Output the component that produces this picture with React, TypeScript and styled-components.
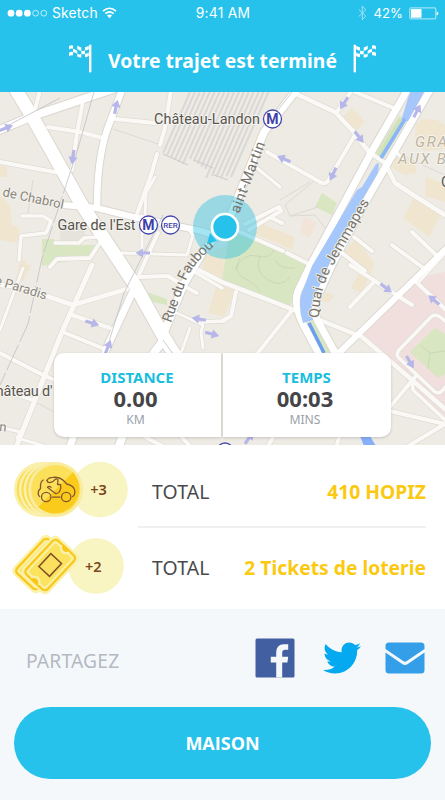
import React from 'react';
import styled, { createGlobalStyle } from 'styled-components';
import { FaTwitter } from 'react-icons/fa';

const Global = createGlobalStyle`
  * { box-sizing: border-box; }
  body { margin: 0; background: #f4f8fb; }
`;

const Screen = styled.div`
  display: flex;
  flex-direction: column;
  width: 445px;
  height: 800px;
  overflow: hidden;
  background: #f4f8fb;
  font-family: 'Noto Sans', 'Open Sans', sans-serif;
`;

const Header = styled.header`
  height: 92px;
  background: #26c2eb;
  color: #fff;
`;

const StatusBar = styled.div`
  display: grid;
  grid-template-columns: 1fr auto 1fr;
  align-items: center;
  height: 26px;
  padding: 0 6px 0 7px;
  font: 400 13.2px/26px Inter, sans-serif;
`;

const StatusGroup = styled.div<{ $end?: boolean }>`
  display: flex;
  align-items: center;
  justify-content: ${(p) => (p.$end ? 'flex-end' : 'flex-start')};
  gap: ${(p) => (p.$end ? 6 : 4)}px;
`;

const Carrier = styled.span`
  font-size: 13.8px;
  letter-spacing: 0.2px;
`;

const Clock = styled.span`
  font-size: 13.8px;
  letter-spacing: 0.25px;
`;

const TitleRow = styled.div`
  display: flex;
  align-items: flex-start;
  justify-content: center;
  padding-top: 18px;
  gap: 16px;
`;

const Title = styled.h1`
  margin: 3px 0 0;
  font-size: 19.3px;
  font-weight: 700;
  line-height: 28px;
  letter-spacing: 0.05px;
  white-space: nowrap;
`;

const MapArea = styled.section`
  display: grid;
  height: 353px;
  overflow: hidden;
  background: #eeebe5;
  > * { grid-area: 1 / 1; }
`;

const Stats = styled.div`
  z-index: 1;
  display: grid;
  grid-template-columns: 167px 168px;
  gap: 2px;
  align-self: end;
  justify-self: start;
  height: 84px;
  margin: 0 0 8px 54px;
`;

const StatCard = styled.div<{ $side: 'left' | 'right' }>`
  display: flex;
  flex-direction: column;
  align-items: center;
  padding: 14px 4px 0 0;
  background: #fff;
  border-radius: ${(p) => (p.$side === 'left' ? '10px 0 0 10px' : '0 10px 10px 0')};
  box-shadow: 0 1px 3px rgba(0, 0, 0, 0.17);
`;

const StatLabel = styled.div`
  padding-left: 3px;
  font-size: 15px;
  line-height: 20px;
  font-weight: 700;
  color: #17bee0;
`;

const StatValue = styled.div`
  font-size: 22px;
  line-height: 22px;
  font-weight: 700;
  color: #454548;
`;

const StatUnit = styled.div`
  margin-top: 2px;
  font-size: 12.2px;
  line-height: 17px;
  color: #9a9fab;
`;

const Rewards = styled.section`
  height: 164px;
  padding: 7px 19px 0 10px;
  background: #fff;
`;

const RewardRow = styled.div`
  display: grid;
  grid-template-columns: 128px 1fr;
  height: 76px;
`;

const RewardText = styled.div<{ $divided?: boolean }>`
  display: flex;
  align-items: center;
  justify-content: space-between;
  padding: ${(p) => (p.$divided ? 4 : 3)}px 0 0 14px;
  border-bottom: ${(p) => (p.$divided ? '2px solid #f0f0f1' : '0')};
`;

const TotalLabel = styled.span`
  font-size: 19.4px;
  letter-spacing: 0.15px;
  color: #4a4a4d;
`;

const TotalValue = styled.span`
  font-size: 19.3px;
  font-weight: 700;
  color: #fbc90f;
  white-space: nowrap;
`;

const ShareRow = styled.section`
  display: flex;
  align-items: center;
  height: 98px;
  padding: 0 20px 0 26px;
  color: #b5bac2;
`;

const ShareLabel = styled.span`
  flex: 1;
  padding-top: 4px;
  font-size: 19.3px;
  letter-spacing: 0.15px;
`;

const ShareIcons = styled.div`
  display: flex;
  align-items: center;
`;

const ShareLink = styled.button<{ $gap?: number }>`
  display: flex;
  margin: 0 0 0 ${(p) => p.$gap ?? 0}px;
  padding: 0;
  border: 0;
  background: none;
  color: #05a9ef;
`;

const HomeButton = styled.button`
  align-self: center;
  width: 417px;
  height: 72px;
  padding: 0 0 1px;
  border: 0;
  border-radius: 36px;
  background: #26c2eb;
  color: #fff;
  font: 700 18px 'Open Sans', sans-serif;
`;

const Flag = ({ flipped }: { flipped?: boolean }) => (
  <svg width="24" height="30" viewBox="0 0 24 30">
    <g transform={flipped ? 'matrix(-1 0 0 1 24 0)' : undefined} fill="#fff">
      <rect x="21" y="0.5" width="2.4" height="28" rx="1.1" />
      <path d="M1 2.2q2-1.3 4-.7v3.3q-2-.6-4 .7zM9.3 1.6q2 1.6 4 2v3.3q-2-.4-4-2zM17 3.2q2-.2 3.8-1.4v3.5q-2 1.2-3.8 1.3z" />
      <path d="M5 4.8q2.2.4 4.3 2v3.2q-2-1.6-4.3-2zM13.3 6.8q2 .3 3.7-.2v3.3q-2 .5-3.7.1z" />
      <path d="M1 8.7q2-1.3 4-.7v3.3q-2-.6-4 .9zM9.3 9.8q2 1 4 .3v3.3q-2 .4-4-1zM17 9.8q2-.3 3.8-1.4v3.5q-2 1.2-3.8 1.3z" />
    </g>
  </svg>
);

const SignalDots = () => (
  <svg width="41" height="9" viewBox="0 0 41 9">
    {[4, 12.2, 20.4].map((x) => <circle key={x} cx={x} cy="4.2" r="3.4" fill="#fff" />)}
    {[28.6, 36.8].map((x) => <circle key={x} cx={x} cy="4.2" r="2.9" fill="none" stroke="#fff" strokeWidth=".8" opacity=".85" />)}
  </svg>
);

const Wifi = () => (
  <svg width="15" height="12" viewBox="0 0 15 12" fill="none" stroke="#fff" strokeWidth="1.6">
    <path d="M1 4.2Q7.5-1.7 14 4.2M3.3 6.7Q7.5 3 11.7 6.7" />
    <path d="M7.5 11.2L5 8.6q2.5-2 5 0z" fill="#fff" stroke="none" />
  </svg>
);

const Bluetooth = () => (
  <svg width="9" height="16" viewBox="0 0 9 16" fill="none" stroke="#fff" strokeWidth="1" opacity=".55">
    <path d="M.8 4.5l7 6.6-3.5 3.7V1.2l3.5 3.7-7 6.6" />
  </svg>
);

const Battery = () => (
  <svg width="30" height="13" viewBox="0 0 30 13">
    <rect x=".8" y=".9" width="26" height="11" rx=".8" fill="none" stroke="#fff" strokeWidth=".9" opacity=".75" />
    <rect x="2" y="2.1" width="10.5" height="8.6" fill="#fff" />
    <path d="M27.6 4.5q1.8.5 1.8 2t-1.8 2z" fill="#fff" />
  </svg>
);

type Road = [string, number];

const ROADS: Road[] = [
  ['M40 90L35 110', 4], ['M83 101L77 133L72 170', 4], ['M48 127L80 132L103 138', 4],
  ['M0 162L60 173', 4], ['M115 119L155 123', 4], ['M171 90L165 128L160 145', 4],
  ['M157 154L152 172L137 214', 4], ['M155 177L146 193L145 215', 3],
  ['M22 216H43L51 221L46 233L21 236L19 260', 3.5], ['M55 243H79L84 238L97 237', 3.5],
  ['M50 267L57 259L90 258L101 241', 4], ['M122 253L187 255L193 235L187 227L140 216', 3],
  ['M142 228V256', 3], ['M158 233L133 288', 4], ['M92 265L62 332L17 445', 5],
  ['M23 268L0 330', 3], ['M0 285L20 287L73 305L127 289', 4.5], ['M72 315L110 328', 4],
  ['M63 332L107 350', 4], ['M0 353L43 375L57 381', 4], ['M0 390L33 400', 3.5],
  ['M0 427L20 432L17 438L44 446', 3], ['M140 277L168 276L182 285L197 293', 4],
  ['M177 313L203 325L201 332L203 348M190 328L180 356', 3],
  ['M193 271L222 288M203 322L222 321L227 318', 3.5], ['M145 437L170 450M175 430L190 446', 4],
  ['M352 90L337 112', 4], ['M355 92L396 109', 4],
  ['M355 135L330 177Q327 186 320 182L267 152', 4], ['M257 168L280 187', 3.5],
  ['M245 224L279 207L281 211L249 230', 4], ['M272 218L282 223', 4],
  ['M238 231L283 251M287 253L307 263', 4], ['M199 270L222 282L294 310', 4.5],
  ['M292 310L257 354', 4], ['M236 292L231 316L223 321', 4], ['M292 92L335 112L352 130L369 152L385 163L395 183L418 198L445 215', 4.5],
  ['M397 153L404 160', 3.5], ['M412 232L435 254', 4], ['M392 245L422 267', 4],
  ['M354 237L372 251', 4], ['M342 253L365 271', 4], ['M350 265L375 281L412 305', 4],
  ['M375 281L350 307', 4], ['M415 281L445 309', 4], ['M419 282L445 253', 3],
  ['M315 318L362 337L412 380L445 409', 4.5], ['M415 377L390 407', 4],
  ['M390 411L445 424L405 448', 4], ['M445 321Q436 312 431 317L399 350Q395 356 400 359L434 391Q440 396 445 387', 3.5],
  ['M412 380L413 390L445 420', 3.5], ['M273 437L265 452M340 434L336 448', 4],
];

const MAIN_ROADS: Road[] = [
  ['M10 80L33 118L80 202L135 285L165 339L178 360', 13], ['M-3 131L33 116L113 89', 8],
  ['M122 90L107 130Q97 160 97 208', 6.5], ['M63 205L97 208L137 218L197 230L222 237', 6],
  ['M135 287L108 345L70 446', 7], ['M166 337L153 354L119 446', 8],
  ['M298 88L264 132L228 222L204 250L184 284L165 330', 7.5],
  ['M408 89L372 151L350 192L309 268L298 291Q293 304 303 324L321 358', 7],
  ['M430 90L385 168L362 208L333 263L316 300Q312 312 320 325L338 358', 7],
  ['M449 246L339 353', 6],
];

const ARROWS: [number, number, number][] = [
  [116, 107, -78], [73, 157, 98], [6, 128, -22], [143, 253, 180], [92, 323, 17],
  [108, 347, -68], [199, 319, 190], [212, 334, 15], [344, 103, 123], [359, 137, 52],
  [284, 159, 203], [333, 174, 115], [417, 111, -62], [386, 288, 37], [434, 300, 220],
  [410, 362, 60], [249, 438, -55],
];

const RAILS = Array.from({ length: 17 }, (_, i) => 190 + i * 4.9);

const Metro = ({ x, y, label }: { x: number; y: number; label: string }) => (
  <g fontFamily="Roboto, sans-serif">
    <circle cx={x} cy={y} r="9" fill="#fff" stroke="#4647ae" strokeWidth="1.3" />
    <text x={x} y={y + (label === 'M' ? 5 : 3)} textAnchor="middle" fontSize={label === 'M' ? 14 : 8} fontWeight={label === 'M' ? 700 : 500} fill="#3e3fa7">{label}</text>
  </g>
);

const CityMap = () => (
  <svg width="445" height="353" viewBox="0 92 445 353">
    <defs>
      <path id="faubourg" d="M171 323L186 281Q193 262 224 238" />
      <path id="quai" d="M319 318Q319 292 331 269L373 196" />
    </defs>
    <rect y="92" width="445" height="353" fill="#eeebe5" />
    <g fill="#f0e6d0">
      <path d="M0 165L7 167V177H0zM0 195L10 205L12 225L20 228L17 243L0 240zM20 265H31L23 282L15 280zM204 255L226 246L222 281L202 271zM217 284L235 290L224 317L208 313zM24 258L28 267H18z" />
      <path d="M352 108L365 122L357 130L340 120zM259 223L295 237L292 250L255 234zM414 197L442 213L429 237L403 218zM356 238L374 263L370 270L342 255z" />
      <path d="M422 119l15 1 8 5v24l-19 2-12-5 2-22zM396 158l18 1 3 14-12 2-13-7zM426 177l19 7v18l-20-6zM363 265H374L362 294L351 288zM327 292L334 296L328 303L320 300z" />
    </g>
    <path d="M304 217L317 223L310 238L300 232z" fill="#f2e4d8" />
    <path d="M60 220L85 224V240L60 243z" fill="#e6e3dd" />
    <g fill="#d8e6c2">
      <path d="M42 239H54V245H95L90 257L42 266zM147 292L167 299V305L148 301zM322 193L337 203L332 215L315 207z" />
      <path d="M228 240L238 232L308 264L295 289L290 307L222 280z" />
      <path d="M399 116L407 119L381 163L372 157zM306 322L313 321L334 353H321z" />
    </g>
    <path d="M445 272L426 276L395 302L360 337L405 378L413 392L445 417z" fill="#f0dfdc" />
    <path d="M435 328L445 334V374L438 378L410 352z" fill="#d8e6c2" />
    <path d="M235 270q8-18 22-14t18-8M240 258q-8 14 4 20t16 14M260 256q-6 16 8 24t22-3M275 260q6 10 20 8M420 345l10 8 15-2M430 353l-2 16" fill="none" stroke="#c5d6b3" strokeWidth=".8" />
    <g fill="none" stroke="#ddd9d3" strokeWidth="1">
      <path d="M113 129L158 144M28 213L33 180M315 180L285 205L290 216L315 215L325 228M280 200L310 182M290 216L318 207M396 153L445 175M30 399L60 415" />
    </g>
    <g stroke="#d9d8d6" strokeWidth="2">
      {RAILS.map((x, i) => {
        const end = i < 6 ? 153 + i * 2.2 : i < 11 ? 159 + (i - 6) * 2.5 : 176 + (i % 3);
        return <line key={x} x1={x} y1="92" x2={x - (end - 92) * 0.44} y2={end} />;
      })}
    </g>
    <path d="M163 154L188 165M194 160L213 168M214 175L228 180" stroke="#cfcecd" strokeWidth="1.3" />
    <g fill="none" strokeLinecap="round" strokeLinejoin="round">
      {ROADS.map(([d, w]) => <path key={d} d={d} stroke="#dfdcd5" strokeWidth={w + 1.4} />)}
      {MAIN_ROADS.map(([d, w]) => <path key={d} d={d} stroke="#dbd7d0" strokeWidth={w + 2} />)}
      {ROADS.map(([d, w]) => <path key={d} d={d} stroke="#faf9f6" strokeWidth={w} />)}
      {MAIN_ROADS.map(([d, w]) => <path key={d} d={d} stroke="#fff" strokeWidth={w} />)}
    </g>
    <path d="M410 92H424L408 121L401 121zM376 164L379 163L378 173L365 195L329 265L314 298Q310 310 313 320L303 323Q298 308 301 295L312 266L357 190L362 187z" fill="#a5c7fc" />
    <path d="M309 323L324 353" stroke="#6c9ff0" strokeWidth="3.5" />
    <path d="M360 436H370L376 446H364z" fill="#87b0fa" />
    <path d="M399 119L406 121L383 157L377 155z" fill="#cfe1b9" />
    <path d="M405 119L381 158" stroke="#8ab5f8" strokeWidth="3.6" />
    <path d="M94 92L79 145L72 167M163 215L124 293L108 345M7 126L60 98M163 340L176 358M292 92L274 115" fill="none" stroke="#c0c0c3" strokeWidth=".8" />
    <path d="M72 167L42 258L28 324L0 385" fill="none" stroke="#c0c0c3" strokeWidth=".8" strokeDasharray="28 3" />
    <g fill="#b6b6e8">
      {ARROWS.map(([x, y, a]) => (
        <path key={`${x}-${y}`} d="M-7-1.6H0V-4.6L7.5 0L0 4.6V1.6H-7z" transform={`translate(${x} ${y}) rotate(${a})`} />
      ))}
    </g>
    <circle cx="225" cy="227" r="32" fill="#26c2e3" fillOpacity=".42" />
    <g fontFamily="Roboto, sans-serif" fill="#57554f" stroke="#f6f4ef" strokeWidth="1.8" paintOrder="stroke" strokeLinejoin="round">
      <text x="154" y="124" fontSize="14.4" textLength="106">Château-Landon</text>
      <text x="57.5" y="230" fontSize="14.4" textLength="78">Gare de l'Est</text>
      <text x="-13.5" y="396" fontSize="14.4" textLength="66">Château d'</text>
      <text x="441" y="187" fontSize="14.4">C</text>
      <g fill="#8a867c">
        <text transform="translate(2 196) rotate(12)" fontSize="13">de Chabrol</text>
        <text transform="translate(-6 284) rotate(17)" fontSize="13">e Paradis</text>
        <text x="-1" y="431" fontSize="13" transform="rotate(5 0 431)">n</text>
      </g>
      <g fill="#77746d" stroke="none">
        <text fontSize="14.2"><textPath href="#faubourg" textLength="90">Rue du Faubou</textPath></text>
        <text transform="translate(239 214) rotate(-69.5)" fontSize="14.4" textLength="75">aint-Martin</text>
        <text fontSize="14.4" stroke="#f6f4ef"><textPath href="#quai" textLength="128">Quai de Jemmapes</textPath></text>
      </g>
      <g fill="#bdb39f" fontStyle="italic" fontSize="15" letterSpacing="1.8">
        <text x="415" y="147">GRAN</text>
        <text x="398" y="164">AUX B</text>
      </g>
    </g>
    <Metro x={272.5} y={119} label="M" />
    <Metro x={148.5} y={225} label="M" />
    <Metro x={170.5} y={225} label="RER" />
    <circle cx="225" cy="451" r="8" fill="#fff" stroke="#4647ae" strokeWidth="1.4" />
    <path d="M210 233L207 244L217 241z" fill="#26c2eb" />
    <circle cx="225" cy="227" r="13" fill="#26c2eb" stroke="#fff" strokeWidth="2.6" />
  </svg>
);

const Coins = () => (
  <svg width="128" height="76" viewBox="10 452 128 76">
    <circle cx="100" cy="489.6" r="27.8" fill="#f8f5c2" />
    {[41.5, 46.2, 51].map((x) => (
      <g key={x}>
        <circle cx={x} cy="489.6" r="27.5" fill="#faf0ab" />
        <circle cx={x} cy="489.6" r="24.8" fill="#fadb4c" />
      </g>
    ))}
    <circle cx="55.7" cy="489.6" r="27.5" fill="#f9eba0" />
    <circle cx="55.7" cy="489.6" r="24.5" fill="#fbe05a" />
    <path d="M73 472.3A24.5 24.5 0 0 1 38.4 506.9z" fill="#fbcb1c" />
    <g fill="none" stroke="#85572f" strokeWidth="1.3" strokeLinecap="round" strokeLinejoin="round">
      <circle cx="46.2" cy="497" r="4.7" />
      <circle cx="66.2" cy="497" r="4.7" />
      <path d="M52.5 497.2H60M39.7 496.5Q37.5 495 38.7 490.5L40.5 488.5V484.5Q41 481 43.2 480M47 480.5Q48 477.5 53 477.3Q60 476.8 64.5 481.5L66.8 484Q74.500 486 74.800 491Q75 495.500 72.600 496.500" />
      <path d="M47 480.5Q47.5 482.8 50 482.5Q53 482.2 54.5 480Q56.5 477.8 58 480L57.5 484.5H60.5Q61.5 488 59.8 491Q58.5 494 55.5 493.5L51.5 490.5L47.5 487.2Q49 485.5 51 487.3" />
    </g>
    <text x="90.3" y="495.2" fontFamily="Noto Sans, sans-serif" fontWeight="600" fontSize="14.5" fill="#7d4419">+3</text>
  </svg>
);

const TicketOutline = ({ x, y }: { x: number; y: number }) => (
  <g transform={`translate(${x} ${y}) rotate(-47)`}>
    <rect x="-26.5" y="-18" width="53" height="36" rx="6" fill="#fbf1aa" />
    <rect x="-23.2" y="-14.7" width="46.4" height="29.4" rx="4" fill="#fbe360" stroke="#f9c61a" strokeWidth="2" />
    <rect x="-20.7" y="-12.2" width="41.4" height="24.4" rx="2.5" fill="none" stroke="#fbf1aa" strokeWidth="1.8" />
  </g>
);

const Tickets = () => (
  <svg width="128" height="76" viewBox="10 528 128 76">
    <circle cx="96" cy="566" r="27.8" fill="#f8f5c2" />
    <TicketOutline x={41} y={564} />
    <TicketOutline x={50.2} y={565} />
    <g transform="translate(50.2 565) rotate(-47)">
      <path d="M22.500-5.600A5.600 5.600 0 0 0 22.500 5.600zM-22.500-5.600A5.600 5.600 0 0 1-22.500 5.600z" fill="#fbf1aa" />
      <path d="M24-4.500A4.500 4.500 0 0 0 24 4.500zM-24-4.500A4.500 4.500 0 0 1-24 4.500z" fill="#f9c61a" />
      <rect x="-8.8" y="-7.3" width="17.6" height="14.6" fill="#fbe060" stroke="#815126" strokeWidth="1.5" />
    </g>
    <text x="85" y="571.5" fontFamily="Noto Sans, sans-serif" fontWeight="600" fontSize="14.5" fill="#7d4419">+2</text>
  </svg>
);

const FacebookMark = () => (
  <svg width="40" height="40" viewBox="0 0 40 40">
    <rect x=".5" y=".5" width="39" height="39" rx="1.5" fill="#425fa2" />
    <path d="M21.200 39.500V24.500H15.800V18.800H21.200V14.500Q21.200 6.400 28.800 6.200H33.200V11.800H30.300Q27.200 11.800 27.200 14.800V18.800H33.200L32.400 24.500H27.200V39.500z" fill="#f4f8fb" />
  </svg>
);

const MailMark = () => (
  <svg width="40" height="32" viewBox="0 0 40 32" fill="#349ee9">
    <path d="M4 .5H36Q39.5.5 39.5 4V7L21.8 19Q20 20.3 18.2 19L.5 7V4Q.5.5 4 .5z" />
    <path d="M.5 10.5L17.2 22Q20 24 22.8 22L39.5 10.5V28Q39.5 31.5 36 31.5H4Q.5 31.5.5 28z" />
  </svg>
);

export default function App() {
  return (
    <>
      <Global />
      <Screen>
        <Header>
          <StatusBar>
            <StatusGroup>
              <SignalDots />
              <Carrier>Sketch</Carrier>
              <Wifi />
            </StatusGroup>
            <Clock>9:41 AM</Clock>
            <StatusGroup $end>
              <Bluetooth />
              <span>42%</span>
              <Battery />
            </StatusGroup>
          </StatusBar>
          <TitleRow>
            <Flag />
            <Title>Votre trajet est terminé</Title>
            <Flag flipped />
          </TitleRow>
        </Header>
        <MapArea>
          <CityMap />
          <Stats>
            <StatCard $side="left">
              <StatLabel>DISTANCE</StatLabel>
              <StatValue>0.00</StatValue>
              <StatUnit>KM</StatUnit>
            </StatCard>
            <StatCard $side="right">
              <StatLabel>TEMPS</StatLabel>
              <StatValue>00:03</StatValue>
              <StatUnit>MINS</StatUnit>
            </StatCard>
          </Stats>
        </MapArea>
        <Rewards>
          <RewardRow>
            <Coins />
            <RewardText $divided>
              <TotalLabel>TOTAL</TotalLabel>
              <TotalValue>410 HOPIZ</TotalValue>
            </RewardText>
          </RewardRow>
          <RewardRow>
            <Tickets />
            <RewardText>
              <TotalLabel>TOTAL</TotalLabel>
              <TotalValue>2 Tickets de loterie</TotalValue>
            </RewardText>
          </RewardRow>
        </Rewards>
        <ShareRow>
          <ShareLabel>PARTAGEZ</ShareLabel>
          <ShareIcons>
            <ShareLink aria-label="Facebook"><FacebookMark /></ShareLink>
            <ShareLink $gap={28} aria-label="Twitter"><FaTwitter size={38} /></ShareLink>
            <ShareLink $gap={24} aria-label="E-mail"><MailMark /></ShareLink>
          </ShareIcons>
        </ShareRow>
        <HomeButton>MAISON</HomeButton>
      </Screen>
    </>
  );
}
